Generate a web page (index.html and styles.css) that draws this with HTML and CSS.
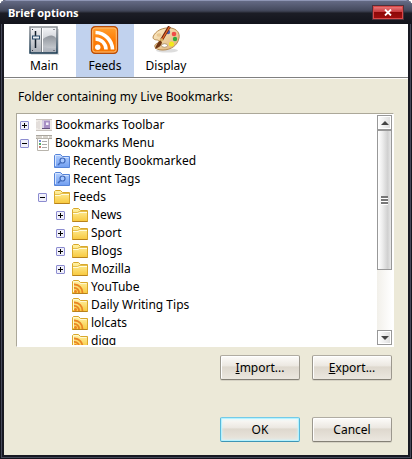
FILE: index.html
```html
<!DOCTYPE html>
<html lang="en">
<head>
<meta charset="utf-8">
<meta name="viewport" content="width=device-width, initial-scale=1">
<title>Brief options</title>
<link rel="stylesheet" href="styles.css">
</head>
<body>
<svg class="defs" aria-hidden="true">
  <defs>
    <linearGradient id="gold" x1="0" y1="0" x2="0" y2="1"><stop offset="0" stop-color="#fff3a8"/><stop offset="1" stop-color="#f8c83c"/></linearGradient>
    <linearGradient id="blue" x1="0" y1="0" x2="0" y2="1"><stop offset="0" stop-color="#b4d0ff"/><stop offset="1" stop-color="#6f9df0"/></linearGradient>
    <linearGradient id="orange" x1="0" y1="0" x2="0" y2="1"><stop offset="0" stop-color="#ffa030"/><stop offset=".5" stop-color="#ff7d08"/><stop offset="1" stop-color="#f47400"/></linearGradient>
    <linearGradient id="steel" x1="0" y1="0" x2="0" y2="1"><stop offset="0" stop-color="#f4f5f7"/><stop offset="1" stop-color="#a9aeb6"/></linearGradient>
    <linearGradient id="frame" x1="0" y1="0" x2="0" y2="1"><stop offset="0" stop-color="#8b8f94"/><stop offset="1" stop-color="#183850"/></linearGradient>
    <linearGradient id="shade" x1="0" y1="0" x2="0" y2="1"><stop offset="0" stop-color="#8f949b"/><stop offset="1" stop-color="#c4c8cd"/></linearGradient>
    <linearGradient id="wood" x1="0" y1="0" x2="1" y2="1"><stop offset="0" stop-color="#fff0cc"/><stop offset="1" stop-color="#dcae70"/></linearGradient>
    <symbol id="folder" viewBox="0 0 16 14">
      <path d="M.5 13.500V1.500L1.500.500H6.500L8.500 2.500H15.500V13.500Z" fill="url(#gold)" stroke="#d9a82c"/>
      <path d="M1 5.500H6L7.500 4.500H15" fill="none" stroke="#fffbdc"/>
      <path d="M1 4.500H5.500L7 3.500H15" fill="none" stroke="#e5bf4c"/>
      <path d="M.500 13.500H15.500" stroke="#b8821c"/>
    </symbol>
    <symbol id="feed-folder" viewBox="0 0 16 14">
      <path d="M.5 13.500V1.500L1.500.500H6.500L8.500 2.500H15.500V13.500Z" fill="url(#gold)" stroke="#d9a82c"/>
      <path d="M1.500 12V1.500H6L8 3.500H14.500" fill="none" stroke="#fff8d0"/>
      <path d="M2 4.500A8 8 0 0 1 10.500 13M2 8A4.500 4.500 0 0 1 7 13" fill="none" stroke="#e98524" stroke-width="1.800"/>
      <circle cx="3.500" cy="11.500" r="1.500" fill="#e98524"/>
      <path d="M.500 13.500H15.500" stroke="#b8821c"/>
    </symbol>
    <symbol id="search-folder" viewBox="0 0 16 14">
      <path d="M.5 13.500V1.500L1.500.500H6.500L8.500 2.500H15.500V13.500Z" fill="url(#blue)" stroke="#5684d8"/>
      <path d="M1.500 12V1.500H6L8 3.500H14.500" fill="none" stroke="#d4e4ff"/>
      <circle cx="8.500" cy="6.500" r="2.500" fill="#a8c8ff" stroke="#3f68b8" stroke-width="1.200"/>
      <path d="M6.500 8.500L4 11" stroke="#3f68b8" stroke-width="1.500"/>
    </symbol>
    <symbol id="toolbar-icon" viewBox="0 0 16 14">
      <path d="M0 1H16V12H0Z" fill="#eeeae6"/><path d="M0 1.500H16M0 12.500H16" stroke="#c8c2bc"/>
      <path d="M1 4V10M3 3V11" stroke="#d8d2d0"/>
      <path d="M6 2.500H14V10.500H6Z" fill="#a78fc4"/><path d="M6 2.500H8V10.500H6Z" fill="#d8cde4"/>
      <path d="M6 10.500H14" stroke="#65517e"/><path d="M10 4.500H12.500V7H10Z" fill="#f4effa"/>
    </symbol>
    <symbol id="menu-icon" viewBox="0 0 16 16">
      <path d="M0 .500H16V3.500H0Z" fill="#d9d5ce"/><path d="M0 .500H16M0 3.500H16" stroke="#aaa69e"/><path d="M6.500 1V3M12.500 1V3" stroke="#fff"/>
      <path d="M1.500 3.500H12.500V15.500H1.500Z" fill="#fff" stroke="#b8b4ac"/>
      <path d="M3 5H5V7H3Z" fill="#7488d4"/><path d="M3 8H5V10H3Z" fill="#50ad68"/><path d="M3 11H5V13H3Z" fill="#c27a72"/>
      <path d="M6 6.500H11M6 9.500H11M6 12.500H11" stroke="#aaa"/>
    </symbol>
  </defs>
</svg>
<main class="window">
  <header class="titlebar">
    <h1>Brief options</h1>
    <button class="close" type="button" aria-label="Close"><svg width="8" height="7" viewBox="0 0 8 7"><path d="M1 .500L7 6.500M7 .500L1 6.500" stroke="#fff" stroke-width="1.800"/></svg></button>
  </header>
  <div class="content">
    <nav class="tabs">
      <button class="tab" type="button">
        <svg width="30" height="29" viewBox="0 0 30 29"><path d="M2 3H30V29H2Z" fill="#b8bcc0" opacity=".500"/><rect x="1" y="1" width="27" height="26" fill="url(#steel)" stroke="url(#frame)" stroke-width="1.500"/><path d="M14 13Q19 9 23 9.500Q26 10 27 12V22Q20 23 14 20Z" fill="url(#shade)"/><path d="M12.500 2V26" stroke="#7e8388"/><path d="M13.500 2V26" stroke="#fff"/><path d="M3 3.500h1M24.500 3.500h1M3 24.500h1M24.500 24.500h1" stroke="#334"/><path d="M6.500 5V22" stroke="#111c28" stroke-width="1.500"/><rect x="3.500" y="10" width="7" height="3" fill="#e8edf2" stroke="#294b69"/></svg>
        <span>Main</span>
      </button>
      <button class="tab selected" type="button">
        <svg width="30" height="29" viewBox="0 0 30 29"><rect x="1.500" y=".750" width="26" height="26.500" rx="3.500" fill="url(#orange)" stroke="#b84c08" stroke-width="1.300"/><rect x="2.700" y="2" width="23.600" height="24" rx="2.500" fill="none" stroke="#ffc078" stroke-width="1"/><g fill="none" stroke="#fff" stroke-width="3.600"><path d="M5.500 6.500A17.500 17.500 0 0 1 22.500 23.500"/><path d="M5.500 13A10.500 10.500 0 0 1 16 23.500"/></g><circle cx="7.800" cy="21.200" r="2.700" fill="#fff"/></svg>
        <span>Feeds</span>
      </button>
      <button class="tab" type="button">
        <svg width="30" height="29" viewBox="0 0 30 29"><ellipse cx="16" cy="24.500" rx="11" ry="2" fill="#bbb" opacity=".500"/><path d="M2 11C4 5 12 1 20 2C26 3 29 7 28 12C27 19 20 24 12 24C6 24 3 22 4 19C5 17 9 17 8 15C7 13 2 15 2 11Z" fill="url(#wood)" stroke="#b68a50"/><ellipse cx="8" cy="9" rx="2.500" ry="1.700" fill="#e9c792"/><circle cx="17" cy="6" r="2.200" fill="#4c5da8"/><circle cx="23" cy="8" r="2.300" fill="#f04c48"/><circle cx="24" cy="13" r="2.200" fill="#30aa3c"/><circle cx="20.500" cy="18" r="2.500" fill="#f4ea1c"/><ellipse cx="13.500" cy="19.500" rx="3" ry="1.800" fill="#fff" stroke="#a58b64" stroke-width=".800"/><path d="M18.500.500L10.500 14" stroke="#6d2410" stroke-width="3"/><path d="M18.500 1L11 13.500" stroke="#e86a26" stroke-width="1.300"/><path d="M11.500 13L8.500 16" stroke="#d7b264" stroke-width="3"/><path d="M9.500 14.500Q6 16 4 23Q10 21 11 16.500Z" fill="#703614"/></svg>
        <span>Display</span>
      </button>
    </nav>
    <section class="pane">
      <h2 id="tree-label">Folder containing my Live Bookmarks:</h2>
      <div class="listbox">
        <ul class="tree" role="tree" aria-labelledby="tree-label">
          <li role="treeitem"><div class="row"><button class="twisty" type="button" aria-label="Expand"></button><svg class="icon"><use href="#toolbar-icon"/></svg><span>Bookmarks Toolbar</span></div></li>
          <li role="treeitem"><div class="row"><button class="twisty open" type="button" aria-label="Collapse"></button><svg class="icon tall"><use href="#menu-icon"/></svg><span>Bookmarks Menu</span></div>
            <ul role="group">
              <li role="treeitem"><div class="row leaf"><svg class="icon"><use href="#search-folder"/></svg><span>Recently Bookmarked</span></div></li>
              <li role="treeitem"><div class="row leaf"><svg class="icon"><use href="#search-folder"/></svg><span>Recent Tags</span></div></li>
              <li role="treeitem"><div class="row"><button class="twisty open" type="button" aria-label="Collapse"></button><svg class="icon"><use href="#folder"/></svg><span>Feeds</span></div>
                <ul role="group">
                  <li role="treeitem"><div class="row"><button class="twisty" type="button" aria-label="Expand"></button><svg class="icon"><use href="#folder"/></svg><span>News</span></div></li>
                  <li role="treeitem"><div class="row"><button class="twisty" type="button" aria-label="Expand"></button><svg class="icon"><use href="#folder"/></svg><span>Sport</span></div></li>
                  <li role="treeitem"><div class="row"><button class="twisty" type="button" aria-label="Expand"></button><svg class="icon"><use href="#folder"/></svg><span>Blogs</span></div></li>
                  <li role="treeitem"><div class="row"><button class="twisty" type="button" aria-label="Expand"></button><svg class="icon"><use href="#folder"/></svg><span>Mozilla</span></div></li>
                  <li role="treeitem"><div class="row leaf"><svg class="icon"><use href="#feed-folder"/></svg><span>YouTube</span></div></li>
                  <li role="treeitem"><div class="row leaf"><svg class="icon"><use href="#feed-folder"/></svg><span>Daily Writing Tips</span></div></li>
                  <li role="treeitem"><div class="row leaf"><svg class="icon"><use href="#feed-folder"/></svg><span>lolcats</span></div></li>
                  <li role="treeitem"><div class="row leaf"><svg class="icon"><use href="#feed-folder"/></svg><span>digg</span></div></li>
                </ul>
              </li>
            </ul>
          </li>
        </ul>
        <div class="scrollbar">
          <button class="arrow" type="button" aria-label="Scroll up"><svg width="8" height="4" viewBox="0 0 8 4"><path d="M4 0L8 4H0Z" fill="#444"/></svg></button>
          <div class="track"><div class="thumb"><i></i><i></i><i></i></div></div>
          <button class="arrow" type="button" aria-label="Scroll down"><svg width="8" height="4" viewBox="0 0 8 4"><path d="M0 0H8L4 4Z" fill="#444"/></svg></button>
        </div>
      </div>
      <div class="actions">
        <button class="button" type="button"><u>I</u>mport...</button>
        <button class="button" type="button"><u>E</u>xport...</button>
      </div>
      <footer class="actions dialog">
        <button class="button default" type="button">OK</button>
        <button class="button" type="button">Cancel</button>
      </footer>
    </section>
  </div>
</main>
</body>
</html>
```
FILE: styles.css
```css
* {
  box-sizing: border-box;
}

body {
  margin: 0;
  background: #fff;
  color: #000;
  font: 12px/18px "Noto Sans", "DejaVu Sans Condensed", sans-serif;
}

button {
  margin: 0;
  padding: 0;
  border: 0;
  font: inherit;
  color: inherit;
}

svg {
  display: block;
  flex: none;
}

ul {
  list-style: none;
  margin: 0;
  padding: 0;
}

.defs {
  position: absolute;
  width: 0;
  height: 0;
}

.window {
  display: flex;
  flex-direction: column;
  min-height: 100vh;
  padding: 0 4px 4px;
  border-radius: 6px 6px 0 0;
  background: #181922;
  box-shadow: inset 0 0 0 1px #14151e, inset 0 0 0 2px #454859;
}

.titlebar {
  display: flex;
  align-items: center;
  justify-content: space-between;
  height: 24px;
  margin: 0 -4px;
  padding: 0 8px;
  border-top: 1px solid #8e95b4;
  border-radius: 6px 6px 0 0;
  background: linear-gradient(#646a84, #454a5e 40%, #323543 48%, #1c1d26 52%, #12131b);
}

h1 {
  margin: 0;
  font-size: 11px;
  font-weight: bold;
  color: #fff;
}

.close {
  display: grid;
  place-items: center;
  width: 32px;
  height: 15px;
  border: 1px solid #50303a;
  background: linear-gradient(#ee8080, #c83c40 45%, #8e0808 50%, #a01010);
  box-shadow: inset 0 0 0 1px #d84848;
}

.content {
  display: flex;
  flex: 1;
  flex-direction: column;
  background: #ece9d8;
}

.tabs {
  display: flex;
  gap: 3px;
  height: 55px;
  padding: 0 11px;
  border-bottom: 1px solid #fff;
  background: linear-gradient(#808080, #808080) bottom / 100% 1px no-repeat #fff;
}

.tab {
  display: flex;
  flex-direction: column;
  align-items: center;
  gap: 2px;
  width: 58px;
  height: 53px;
  padding-top: 2px;
  background: none;
}

.tab.selected {
  background: #c1d2ee;
}

.pane {
  display: flex;
  flex: 1;
  flex-direction: column;
  padding: 9px 14px 13px 12px;
}

h2 {
  margin: 0 0 7px 2px;
  font-size: 12px;
  font-weight: normal;
}

.listbox {
  display: flex;
  flex: 1 1 0;
  min-height: 120px;
  overflow: hidden;
  border: 1px solid;
  border-color: #aca899 #fff #fff #aca899;
  background: #fff;
  padding: 1px;
}

.tree {
  flex: 1;
  height: 0;
  min-height: 100%;
  padding-top: 1px;
  overflow: hidden;
}

.tree ul {
  padding-left: 18px;
}

.row {
  display: flex;
  align-items: center;
  height: 18px;
  padding-left: 2px;
}

.row.leaf {
  padding-left: 18px;
}

.twisty {
  width: 9px;
  height: 9px;
  margin-right: 7px;
  border: 1px solid #8c8cd0;
  border-radius: 1px;
  background:
    linear-gradient(#000, #000) center / 5px 1px no-repeat,
    linear-gradient(#000, #000) center / 1px 5px no-repeat,
    #f0f0fa;
}

.twisty.open {
  background: linear-gradient(#000, #000) center / 5px 1px no-repeat #f0f0fa;
}

.icon {
  width: 16px;
  height: 14px;
  margin-right: 3px;
}

.icon.tall {
  height: 16px;
}

.scrollbar {
  display: flex;
  flex-direction: column;
  width: 15px;
}

.arrow {
  display: grid;
  place-items: center;
  height: 15px;
  border: 1px solid #989898;
  background: linear-gradient(90deg, #fff, #dcdcdc);
  box-shadow: inset 0 0 0 1px #fff;
}

.track {
  flex: 1;
  background: linear-gradient(90deg, #f2f0ea, #fff);
}

.thumb {
  display: flex;
  flex-direction: column;
  align-items: center;
  justify-content: center;
  height: 70%;
  border: 1px solid #989898;
  background: linear-gradient(90deg, #fff, #f0f0f0 30%, #d0d0d0 75%, #e8e8e8);
}

.thumb i {
  width: 7px;
  height: 3px;
  border-bottom: 1px solid #fff;
  background: #777;
}

.actions {
  display: flex;
  justify-content: flex-end;
  gap: 12px;
  padding: 8px 2px 0 0;
}

.actions.dialog {
  padding-top: 37px;
}

.button {
  width: 80px;
  height: 25px;
  border: 1px solid;
  border-color: #b0aca2 #9c988e #848076;
  border-radius: 2px;
  background: linear-gradient(#fdfcfa, #ece8e2 42%, #ded8ce 48%, #ebe7df);
  box-shadow: inset 1px 1px 0 #fff, 0 1px 0 #d6d2c4;
}

.button.default {
  border-color: #74cbe8 #58b8d8 #3f95b4;
  box-shadow: inset 0 0 0 1px #b4f2ff, inset 0 0 3px 1px #d0f6ff;
}
```
